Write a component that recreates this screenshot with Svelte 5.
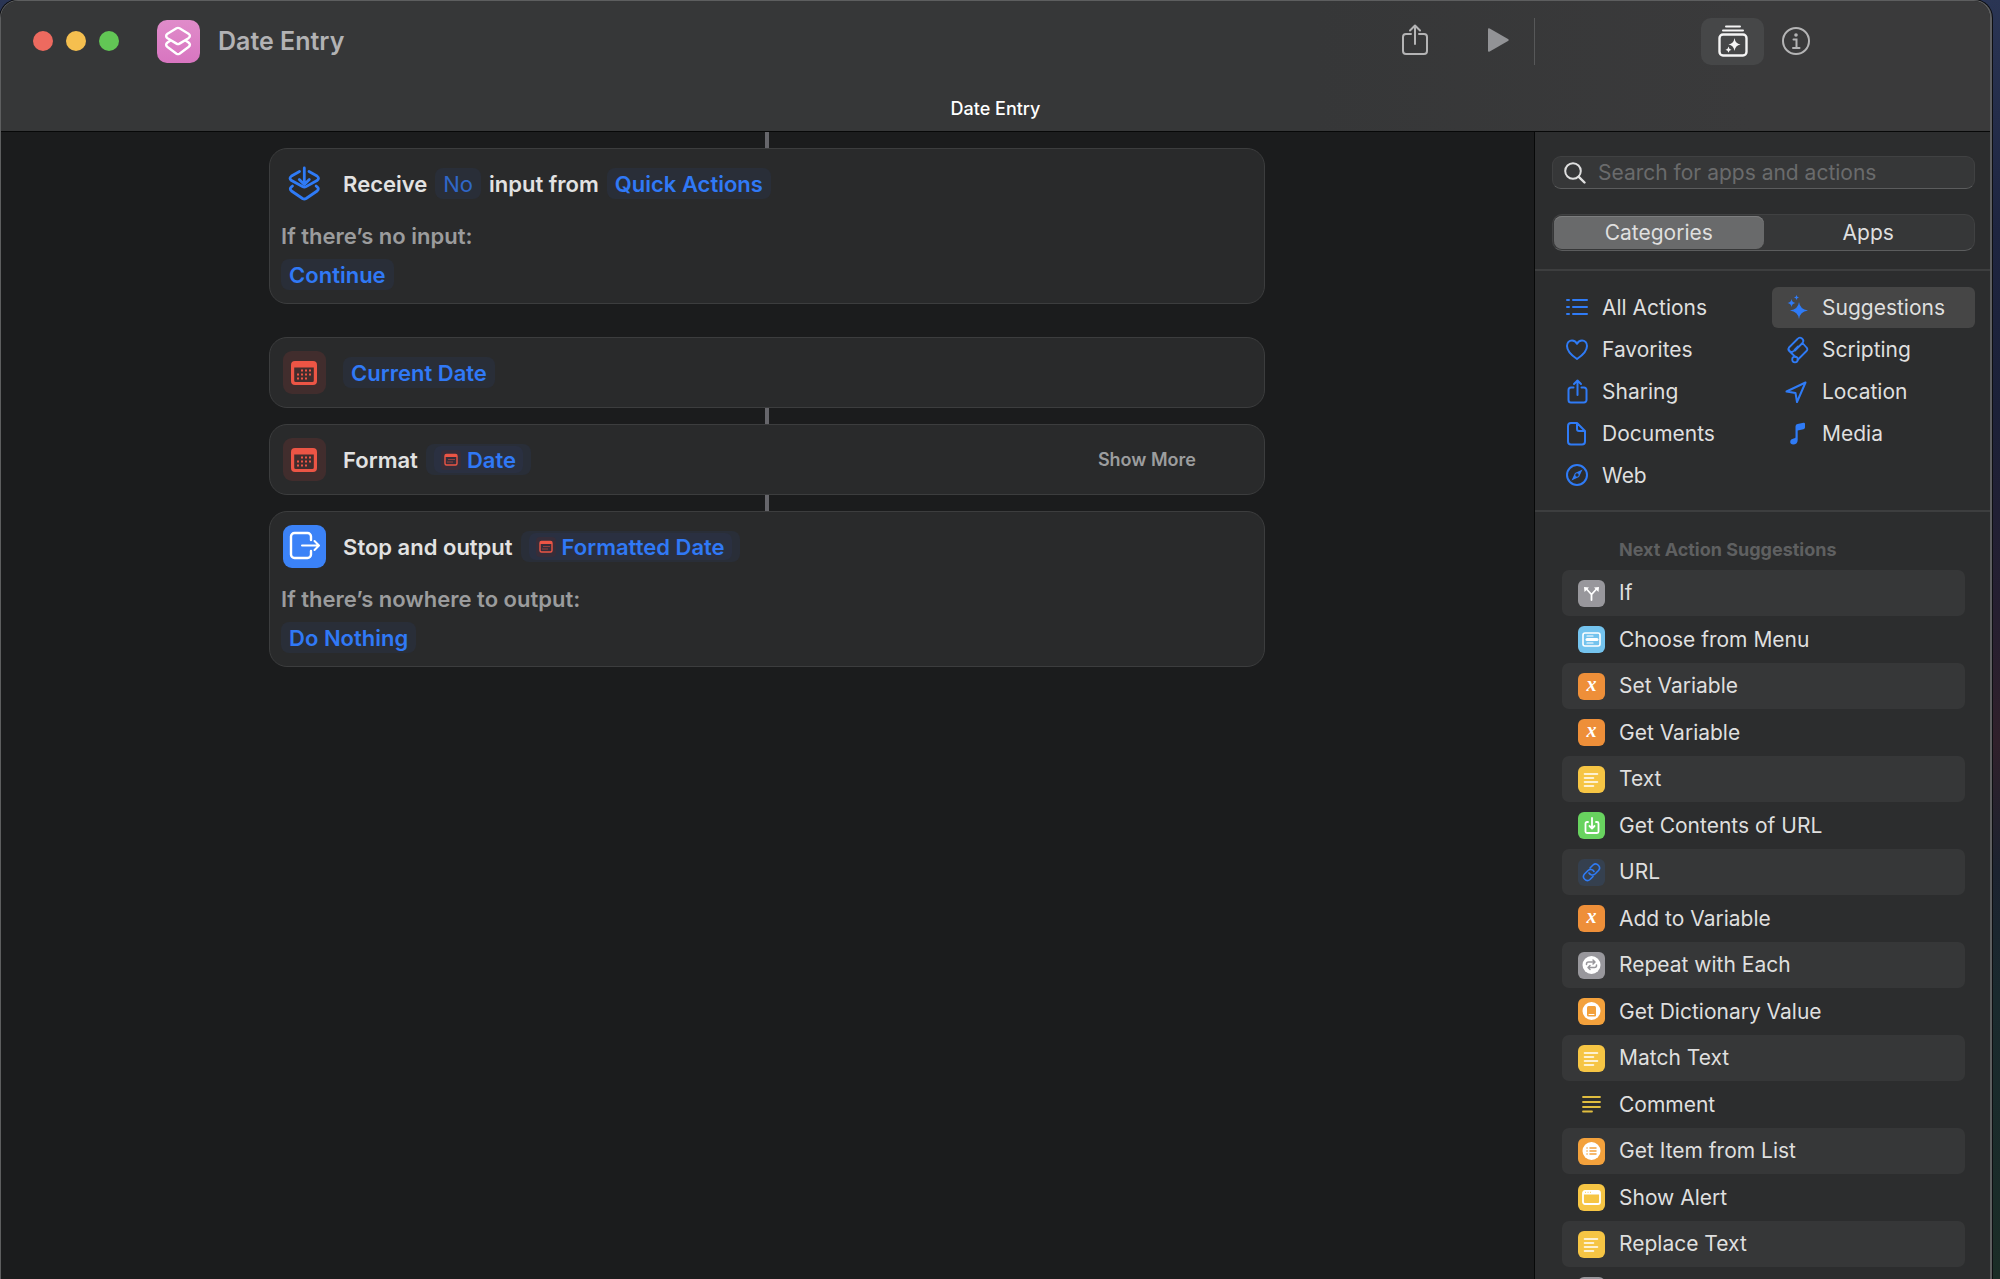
<script>
  let tab = $state('Categories');
  let query = $state('');
  let selected = $state('Suggestions');

  const categories = [
    { label: 'All Actions', icon: 'list' },
    { label: 'Suggestions', icon: 'sparkles' },
    { label: 'Favorites', icon: 'heart' },
    { label: 'Scripting', icon: 'scroll' },
    { label: 'Sharing', icon: 'share' },
    { label: 'Location', icon: 'location' },
    { label: 'Documents', icon: 'doc' },
    { label: 'Media', icon: 'note' },
    { label: 'Web', icon: 'compass' }
  ];

  const actions = [
    { label: 'If', icon: 'branch', tint: 'gray' },
    { label: 'Choose from Menu', icon: 'menu', tint: 'sky' },
    { label: 'Set Variable', icon: 'variable', tint: 'orange' },
    { label: 'Get Variable', icon: 'variable', tint: 'orange' },
    { label: 'Text', icon: 'text', tint: 'yellow' },
    { label: 'Get Contents of URL', icon: 'download', tint: 'green' },
    { label: 'URL', icon: 'link', tint: 'navy' },
    { label: 'Add to Variable', icon: 'variable', tint: 'orange' },
    { label: 'Repeat with Each', icon: 'repeat', tint: 'gray' },
    { label: 'Get Dictionary Value', icon: 'book', tint: 'amber' },
    { label: 'Match Text', icon: 'text', tint: 'yellow' },
    { label: 'Comment', icon: 'comment', tint: 'plain' },
    { label: 'Get Item from List', icon: 'items', tint: 'amber' },
    { label: 'Show Alert', icon: 'alert', tint: 'yellow' },
    { label: 'Replace Text', icon: 'text', tint: 'yellow' },
    { label: '', icon: 'none', tint: 'gray' }
  ];
</script>

{#snippet calendar()}
  <svg viewBox="0 0 43 43" aria-hidden="true">
    <path fill="currentColor" fill-rule="evenodd" d="M12 10h18a4 4 0 0 1 4 4v16a4 4 0 0 1-4 4H12a4 4 0 0 1-4-4V14a4 4 0 0 1 4-4zm-.8 6.500v13a1.500 1.500 0 0 0 1.500 1.500h16.600a1.500 1.500 0 0 0 1.500-1.500v-13z" />
    <path fill="currentColor" d="M18 18.500h2v2h-2zM22 18.500h2v2h-2zM26 18.500h2v2h-2zM14 22.500h2v2h-2zM18 22.500h2v2h-2zM22 22.500h2v2h-2zM26 22.500h2v2h-2zM14 26.500h2v2h-2zM18 26.500h2v2h-2zM22 26.500h2v2h-2z" />
  </svg>
{/snippet}

{#snippet miniCalendar()}
  <svg viewBox="0 0 20 20" fill="none" stroke="currentColor" aria-hidden="true">
    <rect x="4" y="4.500" width="12" height="10.500" rx="1.500" stroke-width="1.400" />
    <path stroke-width="2" d="M4 6h12" />
    <path stroke-width="1" opacity=".5" d="M7 9.500h7M6 12h6" />
  </svg>
{/snippet}

{#snippet shareIcon()}
  <svg viewBox="0 0 26 32" fill="none" stroke="currentColor" stroke-width="2" stroke-linecap="round" stroke-linejoin="round" aria-hidden="true">
    <path d="M9 10H4a3 3 0 0 0-3 3v14a3 3 0 0 0 3 3h18a3 3 0 0 0 3-3V13a3 3 0 0 0-3-3h-5M13 20V2M8 6.500L13 1.500l5 5" />
  </svg>
{/snippet}

{#snippet categoryIcon(name)}
  <svg viewBox="0 0 28 28" fill="none" stroke="currentColor" stroke-width="2" stroke-linejoin="round" stroke-linecap="round" aria-hidden="true">
    {#if name === 'list'}
      <path d="M10 6h14M10 13h14M10 20h14M4 6h2M4 13h2M4 20h2" />
    {:else if name === 'sparkles'}
      <path fill="currentColor" stroke="none" d="M16 8q.8 7.200 9 8.500-8.200 1.300-9 8.500-.8-7.200-9-8.500Q15.200 15.200 16 8zM8.500 5q.5 3.500 4 4-3.500.5-4 4-.5-3.500-4-4 3.500-.5 4-4zM13.500 1q.3 2.200 2.500 2.500-2.200.3-2.500 2.500-.3-2.200-2.500-2.500 2.200-.3 2.500-2.500z" />
    {:else if name === 'heart'}
      <path d="M14 23C8 19 4 15 4 10 4 6.700 6.300 4.500 9 4.500c2.200 0 4 1.200 5 3.300 1-2.100 2.800-3.300 5-3.300 2.700 0 5 2.200 5 5.500 0 5-4 9-10 13z" />
    {:else if name === 'scroll'}
      <path stroke-width="1.800" d="M6 11.500L14.500 3a3.200 3.200 0 0 1 5 4L12 14.500M6 11.500a3 3 0 0 0 5.500 2.500L15 10.500M6 11.500c-1 1.200-.8 2.500.2 3.500l6.300 6M19.500 7l4 4.500a2.500 2.500 0 0 1 0 3.500L14.500 24" />
      <circle stroke-width="1.800" cx="12" cy="23.500" r="2.800" />
    {:else if name === 'location'}
      <path d="M22.500 4.500L3.500 13.500l9 1.500 1.500 9z" />
    {:else if name === 'doc'}
      <path d="M14 3H8a3 3 0 0 0-3 3v15.500a3 3 0 0 0 3 3h11a3 3 0 0 0 3-3V11zM14 3v6a2 2 0 0 0 2 2h6" />
    {:else if name === 'note'}
      <path fill="currentColor" stroke="none" d="M12.500 6.500q0-2 2-2.400l6-1.300q1.500-.3 1.500 1.200v3.500q0 1.300-1.500 1.700l-5.800 1.300V20c0 3-2 4.500-4.500 4.500-1.800 0-3-1-3-2.500 0-2 1.500-3 3.500-3.400 1.200-.3 1.800-.6 1.800-1.600z" />
    {:else if name === 'compass'}
      <circle cx="14" cy="13" r="10" />
      <path fill="currentColor" fill-rule="evenodd" stroke="none" d="M19.500 7.500l-3.500 7.500-7.500 3.500 3.500-7.500zM14 11.300a1.700 1.700 0 1 0 0 3.400 1.700 1.700 0 0 0 0-3.400z" />
    {:else}
      <path d="M10.500 9.500H8a2.500 2.500 0 0 0-2.500 2.500v10A2.500 2.500 0 0 0 8 24.500h13a2.500 2.500 0 0 0 2.500-2.500V12A2.500 2.500 0 0 0 21 9.500h-2.500M14.500 17V3M11 6l3.500-3.500L18 6" />
    {/if}
  </svg>
{/snippet}

{#snippet actionIcon(name)}
  <svg viewBox="0 0 27 27" fill="none" stroke="currentColor" stroke-width="2" stroke-linejoin="round" stroke-linecap="round" aria-hidden="true">
    {#if name === 'branch'}
      <path stroke-width="1.800" d="M13.500 20v-5.500L8.500 9M13.500 14.500L18.500 9" />
      <path fill="currentColor" stroke="none" d="M6 7l5 .5-4.500 4.500zM21 7l-5 .5 4.500 4.500z" />
    {:else if name === 'menu'}
      <rect x="5" y="7" width="17" height="13" rx="2" stroke-width="1.600" />
      <path stroke-width="1.200" d="M9 10h6M9 17h6" />
      <path stroke-width="3" d="M9 13.500h10" />
    {:else if name === 'variable'}
      <text class="glyph" x="13.500" y="18" text-anchor="middle">x</text>
    {:else if name === 'text'}
      <path stroke-width="1.600" d="M6.500 8h13M6.500 12h9M6.500 16h13M6.500 20h9" />
    {:else if name === 'comment'}
      <path stroke-width="1.800" d="M5 6h17M5 11h17M5 16h17M5 20.500h9" />
    {:else if name === 'download'}
      <path stroke-width="1.800" d="M10 10H9a1.500 1.500 0 0 0-1.500 1.500v8A1.500 1.500 0 0 0 9 21h10a1.500 1.500 0 0 0 1.500-1.500v-8A1.500 1.500 0 0 0 19 10h-1M14 6v10M11.500 14l2.500 2.500 2.500-2.500" />
    {:else if name === 'link'}
      <path stroke-width="1.600" d="M12 9l3-3a3.900 3.900 0 0 1 5.500 5.500L17 15a3.900 3.900 0 0 1-6-1M15 17.500l-3 3A3.900 3.900 0 0 1 6.500 15l3.500-3.500a3.900 3.900 0 0 1 6 1" />
    {:else if name === 'repeat'}
      <circle cx="13.500" cy="13" r="9" fill="currentColor" stroke="none" />
      <path class="knock" stroke-width="1.500" d="M8.500 12.500V12a2 2 0 0 1 2-2h6M15 8l2 2-2 2M18.500 13v.5a2 2 0 0 1-2 2h-6M12 13.500l-2 2 2 2" />
    {:else if name === 'book'}
      <circle cx="13.500" cy="13" r="9" fill="currentColor" stroke="none" />
      <path class="knock-fill" d="M10.500 8h6A1.500 1.500 0 0 1 18 9.500v8a1 1 0 0 1-1 1h-6.500A1.500 1.500 0 0 1 9 17V9.500A1.500 1.500 0 0 1 10.500 8z" />
      <path stroke-width="1" d="M11 16.500h5" />
    {:else if name === 'items'}
      <circle cx="13.500" cy="13" r="9" fill="currentColor" stroke="none" />
      <path class="knock" stroke-width="1.500" d="M12 10h6M12 13h6M12 16h6M9 10h.1M9 13h.1M9 16h.1" />
    {:else if name === 'alert'}
      <rect x="5" y="7" width="17" height="13" rx="2" stroke-width="1.800" />
      <path fill="currentColor" stroke="none" d="M5 7h17v3.500H5z" />
      <path class="knock" stroke-width="1" d="M7.500 8.300h.1M10 8.300h.1M12.500 8.300h.1" />
    {/if}
  </svg>
{/snippet}

<div class="desktop">
  <div class="window">
    <header>
      <div class="toolbar">
        <div class="lead">
          <div class="lights">
            <button class="light red" aria-label="Close"></button>
            <button class="light amber" aria-label="Minimize"></button>
            <button class="light green" aria-label="Zoom"></button>
          </div>
          <span class="appicon">
            <svg viewBox="0 0 43 43" fill="none" stroke="#fff" stroke-width="2.400" stroke-linejoin="round" aria-hidden="true">
              <path d="M19.500 8.300q1.500-.8 3 0l9 5.400q2.800 2 0 4.500l-9 5.400q-1.500.8-3 0l-9-5.400q-2.800-2.300 0-4.500z" />
              <path d="M13.500 20.500l-3 2q-2.800 2.300 0 4.500l9 6.700q1.500.8 3 0l9-6.700q2.800-2.300 0-4.500l-3-2" />
            </svg>
          </span>
          <h1>Date Entry</h1>
          <div class="run">
            <button class="share" aria-label="Share">{@render shareIcon()}</button>
            <button class="play" aria-label="Run">
              <svg viewBox="0 0 21 24" aria-hidden="true"><path fill="currentColor" d="M0 1.500Q0-.3 1.700.6l18.300 10.300q1.500 1.100 0 2.200L1.700 23.400Q0 24.300 0 22.500z" /></svg>
            </button>
          </div>
        </div>
        <div class="panel-switch">
          <button class="switch on" aria-label="Action Library">
            <svg viewBox="0 0 30 32" fill="none" stroke="currentColor" stroke-width="2" stroke-linecap="round" aria-hidden="true">
              <path d="M8 1.500h14M5 5.500h20" />
              <rect x="1.500" y="9.500" width="27" height="21" rx="3.500" stroke-width="2.400" />
              <path fill="currentColor" stroke="none" d="M16.500 13q.8 5.700 6 6.500-5.200.8-6 6.500-.8-5.700-6-6.500 5.200-.8 6-6.500zM10.500 21.500q.4 2.800 3 3.200-2.600.4-3 3.100-.4-2.700-3-3.100 2.600-.4 3-3.200z" />
            </svg>
          </button>
          <button class="switch" aria-label="Shortcut Details">
            <svg class="info" viewBox="0 0 28 28" fill="none" stroke="currentColor" stroke-width="2" stroke-linecap="round" aria-hidden="true">
              <circle cx="14" cy="14" r="13" />
              <circle cx="14" cy="8" r="1.800" fill="currentColor" stroke="none" />
              <path d="M11.500 12.500h3V21M11 21h6.500" />
            </svg>
          </button>
        </div>
      </div>
      <p class="tabname">Date Entry</p>
    </header>

    <div class="body">
      <main>
        <i class="wire"></i>
        <section class="card">
          <div class="head">
            <span class="badge blue">
              <svg viewBox="0 0 43 43" fill="none" stroke="currentColor" stroke-width="2.800" stroke-linejoin="round" stroke-linecap="round" aria-hidden="true">
                <path d="M16.500 9.500L8.500 14q-3 2.300 0 4.600l11 6q1.800 1 3.600 0l10.900-6q3-2.300 0-4.600L26 9.500" />
                <path d="M9.500 24l-1 .8q-2.500 2 0 4.200l11 7.500q1.800 1 3.600 0l11-7.500q2.500-2.200 0-4.200l-1-.8" />
                <path d="M21.300 6v16M16.300 17.500l5 5 5-5" />
              </svg>
            </span>
            <span>Receive</span>
            <button class="chip faint">No</button>
            <span>input from</span>
            <button class="chip">Quick Actions</button>
          </div>
          <p class="sub">If there’s no input:</p>
          <button class="chip">Continue</button>
        </section>

        <section class="card spaced">
          <div class="head">
            <span class="badge date">{@render calendar()}</span>
            <button class="chip">Current Date</button>
          </div>
        </section>
        <i class="wire"></i>

        <section class="card">
          <div class="head">
            <span class="badge date">{@render calendar()}</span>
            <span>Format</span>
            <button class="chip"><span class="token"><span class="mini">{@render miniCalendar()}</span>Date</span></button>
            <button class="more">Show More</button>
          </div>
        </section>
        <i class="wire"></i>

        <section class="card">
          <div class="head">
            <span class="badge stop">
              <svg viewBox="0 0 43 43" fill="none" stroke="currentColor" stroke-width="2.400" stroke-linejoin="round" stroke-linecap="round" aria-hidden="true">
                <path d="M28 15v-3.500A3.500 3.500 0 0 0 24.500 8h-13A3.500 3.500 0 0 0 8 11.500v18a3.500 3.500 0 0 0 3.500 3.500h13a3.500 3.500 0 0 0 3.500-3.500V26" />
                <path stroke-width="2" d="M19 20.500h16.500M31.500 16l4.500 4.500-4.500 4.500" />
              </svg>
            </span>
            <span>Stop and output</span>
            <button class="chip"><span class="token"><span class="mini">{@render miniCalendar()}</span>Formatted Date</span></button>
          </div>
          <p class="sub">If there’s nowhere to output:</p>
          <button class="chip">Do Nothing</button>
        </section>
      </main>

      <aside>
        <div class="finder">
          <label class="search">
            <svg viewBox="0 0 22 22" fill="none" stroke="currentColor" stroke-width="2" stroke-linecap="round" aria-hidden="true">
              <circle cx="9" cy="9" r="7.800" />
              <path stroke-width="2.400" d="M14.800 14.800l5.700 5.700" />
            </svg>
            <input type="text" placeholder="Search for apps and actions" aria-label="Search for apps and actions" bind:value={query} />
          </label>
          <div class="segmented">
            {#each ['Categories', 'Apps'] as name}
              <button class:active={tab === name} onclick={() => (tab = name)}>{name}</button>
            {/each}
          </div>
        </div>

        <nav>
          {#each categories as c}
            <button class:active={selected === c.label} onclick={() => (selected = c.label)}>
              {@render categoryIcon(c.icon)}{c.label}
            </button>
          {/each}
        </nav>

        <div class="suggestions">
          <h2>Next Action Suggestions</h2>
          <ul>
            {#each actions as a}
              <li>
                <span class="tile {a.tint}">{@render actionIcon(a.icon)}</span>
                <span>{a.label}</span>
              </li>
            {/each}
          </ul>
        </div>
      </aside>
    </div>
  </div>
</div>

<style>
  :global(body) {
    background: #1b1c1d;
  }
  * {
    box-sizing: border-box;
  }
  button,
  input {
    font: inherit;
    color: inherit;
    background: none;
    border: 0;
    padding: 0;
    margin: 0;
  }
  h1,
  h2,
  p,
  ul {
    margin: 0;
    padding: 0;
  }
  svg {
    display: block;
  }
  .desktop {
    height: 100vh;
    padding-right: 8px;
    overflow: hidden;
    background: linear-gradient(#2a3554, #1e2540 18%, #1c2138 32%, #261f30 48%, #30202b 58%, #1c2330 68%, #1a2a2e 78%, #1b2d27 100%);
    font-family: Inter, 'Liberation Sans', sans-serif;
    font-size: 21px;
    line-height: 24px;
    color: #dfdfdf;
  }
  .window {
    height: 100%;
    display: flex;
    flex-direction: column;
    overflow: hidden;
    background: #1b1c1d;
    border: solid #5d5e5f;
    border-width: 1px 2px 0 1px;
    border-radius: 18px 18px 0 0;
    box-shadow: 0 0 0 1px #0c0d10;
  }
  header {
    flex: none;
    background: linear-gradient(90deg, #363738 66%, #3a3a3b 88%);
    border-bottom: 1px solid #070808;
  }
  .toolbar {
    display: grid;
    grid-template-columns: minmax(0, 1fr) 455px;
    height: 82px;
    padding-bottom: 2px;
    align-items: center;
  }
  .lead {
    display: flex;
    align-items: center;
    height: 47px;
    padding: 0 25px 0 32px;
    border-right: 1px solid #575859;
  }
  .lights {
    display: flex;
    gap: 13px;
    margin-right: 38px;
  }
  .light {
    width: 20px;
    height: 20px;
    border-radius: 50%;
  }
  .light.red {
    background: #ed6a5f;
  }
  .light.amber {
    background: #f5bf4f;
  }
  .light.green {
    background: #62c655;
  }
  .appicon {
    width: 43px;
    height: 43px;
    border-radius: 10px;
    background: linear-gradient(#e08cca, #d875c0);
    margin-right: 18px;
  }
  h1 {
    font-size: 25px;
    line-height: 30px;
    font-weight: 600;
    color: #b2b2b4;
  }
  .run {
    margin-left: auto;
    display: flex;
    align-items: center;
    gap: 60px;
    padding-bottom: 2px;
    color: #b4b4b5;
  }
  .share svg {
    width: 26px;
    height: 32px;
  }
  .play {
    color: #929396;
  }
  .play svg {
    width: 21px;
    height: 24px;
  }
  .panel-switch {
    display: flex;
    justify-content: center;
    padding-left: 3px;
  }
  .switch {
    width: 63px;
    height: 47px;
    border-radius: 10px;
    display: grid;
    place-items: center;
    color: #b4b4b5;
  }
  .switch.on {
    background: #464748;
    color: #f4f4f4;
  }
  .switch svg {
    width: 30px;
    height: 32px;
  }
  .switch .info {
    width: 28px;
    height: 28px;
  }
  .tabname {
    height: 48px;
    padding-top: 14px;
    text-align: center;
    font-size: 18px;
    font-weight: 500;
    color: #fff;
  }
  .body {
    flex: 1;
    min-height: 0;
    display: grid;
    grid-template-columns: minmax(0, 1fr) 455px;
  }
  main {
    display: flex;
    flex-direction: column;
    align-items: center;
    padding-right: 2px;
  }
  .wire {
    width: 4px;
    height: 16px;
    background: #66666b;
  }
  .card {
    width: 65%;
    padding: 13px 11px;
    background: #292a2b;
    border: 1px solid #3c3d3e;
    border-radius: 18px;
    font-size: 22px;
    font-weight: 600;
    color: #e2e2e2;
  }
  .spaced {
    margin-top: 33px;
  }
  .head {
    display: flex;
    align-items: center;
    gap: 8px;
    padding-left: 2px;
  }
  .badge {
    width: 43px;
    height: 43px;
    border-radius: 9px;
    margin-right: 9px;
  }
  .blue {
    color: #2f7bf6;
  }
  .date {
    background: #412d2d;
    color: #ec5545;
  }
  .stop {
    background: #3b82f7;
    color: #fff;
  }
  .chip {
    display: inline-flex;
    align-items: center;
    height: 31px;
    padding: 0 8px;
    border-radius: 8px;
    background: #292e38;
    color: #3079f6;
  }
  .faint {
    font-weight: 400;
    color: #2f67c8;
  }
  .token {
    display: flex;
    align-items: center;
    gap: 6px;
    height: 27px;
    padding: 0 7px;
    border-radius: 7px;
    background: #2a3041;
  }
  .mini {
    width: 20px;
    height: 20px;
    border-radius: 4px;
    background: #372d39;
    color: #ec5545;
  }
  .more {
    margin-left: auto;
    margin-right: 57px;
    font-size: 18px;
    color: #9c9d9e;
  }
  .sub {
    margin: 19px 0 11px;
    color: #9b9c9d;
  }
  .sub + .chip {
    display: flex;
  }
  aside {
    display: flex;
    flex-direction: column;
    min-height: 0;
    overflow: hidden;
    background: #2c2d2e;
    box-shadow: -1px 0 0 #070808;
  }
  .finder {
    padding: 24px 15px 18px 17px;
    border-bottom: 2px solid #3d3e3f;
  }
  .search {
    display: flex;
    align-items: center;
    gap: 12px;
    height: 33px;
    padding: 0 11px;
    background: #363738;
    border: 1px solid #404142;
    border-bottom-color: #5b5c5d;
    border-radius: 9px;
  }
  .search svg {
    flex: none;
    width: 22px;
    height: 22px;
  }
  .search input {
    flex: 1;
    min-width: 0;
    outline: 0;
  }
  .search input::placeholder {
    color: #6a6b6c;
    opacity: 1;
  }
  .segmented {
    display: grid;
    grid-template-columns: 1fr 1fr;
    height: 37px;
    margin-top: 25px;
    padding: 1px;
    background: #363738;
    border: 1px solid #404142;
    border-bottom-color: #5b5c5d;
    border-radius: 10px;
  }
  .segmented button {
    border-radius: 8px;
  }
  .segmented .active {
    background: #696a6b;
    box-shadow: inset 0 1px #7c7d7e;
  }
  nav {
    display: grid;
    grid-template-columns: 220px minmax(0, 1fr);
    grid-auto-rows: 41px;
    row-gap: 1px;
    padding: 16px 15px 14px 17px;
    border-bottom: 2px solid #3d3e3f;
  }
  nav button {
    display: flex;
    align-items: center;
    gap: 11px;
    padding-left: 11px;
    border-radius: 6px;
    text-align: left;
  }
  nav button svg {
    width: 28px;
    height: 28px;
    color: #2f7bf6;
  }
  nav .active {
    background: #464646;
  }
  .suggestions {
    padding: 26px 25px 0 27px;
  }
  h2 {
    padding-left: 57px;
    margin-bottom: 8px;
    font-size: 18px;
    line-height: 24px;
    font-weight: 700;
    color: #5f6061;
  }
  ul {
    list-style: none;
  }
  li {
    display: flex;
    align-items: center;
    gap: 14px;
    height: 47px;
    padding-left: 16px;
    border-radius: 7px;
  }
  li:nth-child(odd) {
    height: 46px;
    background: #363738;
  }
  .tile {
    width: 27px;
    height: 27px;
    border-radius: 6px;
    color: #fff;
  }
  .gray {
    background: #98979c;
  }
  .sky {
    background: #74c3ee;
  }
  .orange {
    background: #ee8f39;
  }
  .yellow {
    background: #f6c544;
  }
  .green {
    background: #68d35f;
  }
  .navy {
    background: #35404f;
    color: #2f7bf6;
  }
  .amber {
    background: #f3a13c;
  }
  .plain {
    color: #e0bd3f;
  }
  .knock {
    stroke: #98979c;
  }
  .amber .knock {
    stroke: #f3a13c;
  }
  .yellow .knock {
    stroke: #f6c544;
  }
  .knock-fill {
    fill: #f3a13c;
    stroke: none;
  }
  .glyph {
    font: italic bold 20px 'Liberation Serif', serif;
    fill: currentColor;
    stroke: none;
  }
</style>
